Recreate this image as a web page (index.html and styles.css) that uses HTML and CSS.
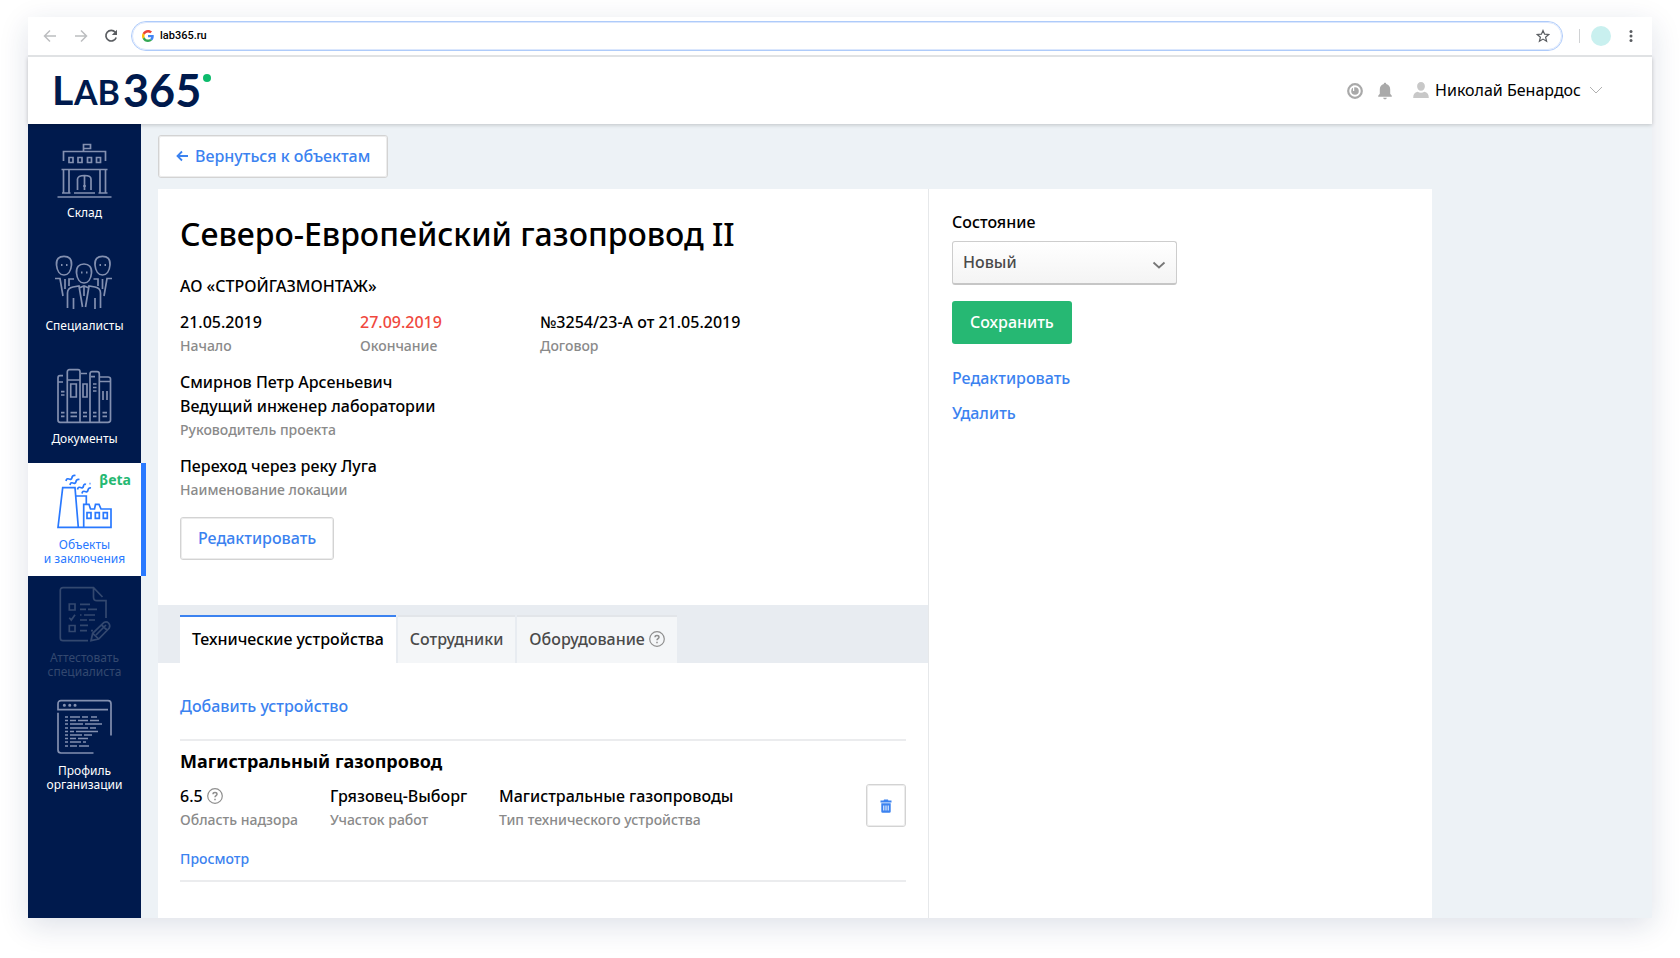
FILE: index.html
```
<!DOCTYPE html>
<html lang="ru">
<head>
<meta charset="utf-8">
<title>Северо-Европейский газопровод II — LAB365</title>
<link rel="stylesheet" href="styles.css">
</head>
<body>
<div class="window">
  <div class="toolbar">
    <div class="toolbar-nav">
      <button class="icon-btn muted" type="button" aria-label="Назад"><svg width="14" height="14" viewBox="0 0 14 14"><path d="M13 7H2M7 1.5L1.5 7L7 12.5"/></svg></button>
      <button class="icon-btn muted" type="button" aria-label="Вперёд"><svg width="14" height="14" viewBox="0 0 14 14"><path d="M1 7H12M7 1.5L12.500 7L7 12.5"/></svg></button>
      <button class="icon-btn" type="button" aria-label="Обновить"><svg width="14" height="14" viewBox="0 0 14 14"><path d="M11.300 3.300A5.300 5.300 0 1 0 12.200 8.500" stroke-width="1.700"/><path d="M13 .8V6H7.800Z" fill="currentColor" stroke="none"/></svg></button>
    </div>
    <div class="address">
      <svg width="12" height="12" viewBox="0 0 48 48"><path fill="#ea4335" d="M24 9.500c3.540 0 6.710 1.220 9.210 3.600l6.850-6.850C35.900 2.380 30.470 0 24 0 14.620 0 6.510 5.380 2.560 13.220l7.980 6.190C12.430 13.720 17.740 9.500 24 9.500z"/><path fill="#4285f4" d="M46.980 24.550c0-1.570-.15-3.090-.38-4.550H24v9.020h12.940c-.58 2.960-2.260 5.480-4.780 7.180l7.730 6c4.510-4.180 7.090-10.360 7.090-17.650z"/><path fill="#fbbc05" d="M10.530 28.590c-.48-1.450-.76-2.990-.76-4.590s.27-3.140.76-4.590l-7.980-6.190C.92 16.460 0 20.120 0 24c0 3.880.92 7.540 2.560 10.780l7.970-6.190z"/><path fill="#34a853" d="M24 48c6.480 0 11.930-2.130 15.890-5.810l-7.730-6c-2.150 1.450-4.920 2.300-8.160 2.300-6.260 0-11.570-4.220-13.470-9.910l-7.980 6.190C6.510 42.620 14.620 48 24 48z"/></svg>
      <input class="address-input" type="text" value="lab365.ru" aria-label="Адрес">
      <button class="icon-btn" type="button" aria-label="В закладки"><svg width="14" height="14" viewBox="0 0 14 14"><path stroke-width="1.200" d="M7 1.500L8.600 5.200L12.700 5.500L9.600 8.200L10.600 12.300L7 10.100L3.400 12.300L4.400 8.200L1.300 5.500L5.400 5.200Z"/></svg></button>
    </div>
    <div class="toolbar-end">
      <span class="separator"></span>
      <span class="profile-dot"></span>
      <button class="icon-btn" type="button" aria-label="Меню"><svg width="14" height="14" viewBox="0 0 14 14"><g fill="currentColor" stroke="none"><circle cx="7" cy="2.500" r="1.500"/><circle cx="7" cy="7" r="1.500"/><circle cx="7" cy="11.500" r="1.500"/></g></svg></button>
    </div>
  </div>

  <header class="header">
    <svg class="logo" width="168" height="56" viewBox="-4 -8 168 56" role="img" aria-label="LAB365">
      <text x="-3" y="34" font-size="41">L</text>
      <text x="19" y="34" font-size="34">AB</text>
      <text x="68" y="36" font-size="45">365</text>
      <circle cx="152" cy="7" r="4"/>
    </svg>
    <div class="header-tools">
      <button class="icon-btn soft" type="button" aria-label="Обновления"><svg width="16" height="16" viewBox="0 0 16 16"><circle cx="8" cy="8" r="6.800" stroke-width="2.200"/><circle cx="8" cy="8" r="3.800" fill="currentColor" stroke="none"/><path d="M6.600 2.800V8" stroke="#fff" stroke-width="1.200"/></svg></button>
      <button class="icon-btn soft" type="button" aria-label="Уведомления"><svg width="16" height="18" viewBox="0 0 16 18"><path fill="currentColor" stroke="none" d="M8 .8c.8 0 1.200.5 1.200 1.200 2.600.6 4 2.700 4 5.400v4.400l1.600 1.900v1H1.200v-1l1.600-1.900V7.400c0-2.700 1.400-4.800 4-5.400C6.800 1.300 7.200.8 8 .8zM6.200 15.700h3.600c-.2 1-.9 1.600-1.800 1.600s-1.600-.6-1.800-1.600z"/></svg></button>
      <button class="user" type="button">
        <svg width="16" height="16" viewBox="0 0 16 16"><path fill="#c8c8c8" d="M8 0c2.300 0 3.900 1.700 3.900 4.200S10.300 8.800 8 8.800 4.100 6.700 4.100 4.200 5.700 0 8 0zM.2 16c0-3.500 1.300-5.500 4.400-6.200 2 1.200 4.800 1.200 6.800 0 3.100.7 4.400 2.700 4.400 6.200z"/></svg>
        <span>Николай Бенардос</span>
        <svg class="user-arrow" width="14" height="8" viewBox="0 0 14 8"><path d="M1 1L7 7L13 1"/></svg>
      </button>
    </div>
  </header>

  <div class="body">
    <nav class="sidebar">
      <a class="nav-item" href="#">
        <svg class="nav-icon" width="56" height="56" viewBox="0 0 56 56"><path d="M.5 55H54.500M6.500 19V9.500H48.500V19M26.500 9.500V2.500H33.500V6.500H27M12 15.500h4v5h-4zM21 15.500h4v5h-4zM30.500 15.500h4v5h-4zM39.500 15.500h4v5h-4zM4.500 27.500H50.500M6.500 28V51M12 28V51M43 28V51M48.500 28V51M5 51H13.500M17 51H38M41.500 51H50.500M20.500 48V37Q21 33.500 27.500 33.500T34 37V48M27.500 34V48M26 44H29"/></svg>
        <span>Склад</span>
      </a>
      <a class="nav-item" href="#">
        <svg class="nav-icon" width="56" height="56" viewBox="0 0 56 56"><path d="M7 1.300C12 1.300 15 4 14.500 10C14 16 11 20 7 20S0 16-.5 10C-1 4 2 1.300 7 1.300zM45.500 1.300C50.500 1.300 53.500 4 53 10C52.500 16 49.500 20 45.500 20S38.500 16 38 10C37.500 4 40.500 1.300 45.500 1.300zM27 9C32 9 35 12 34.500 18C34 24 31 28 27 28S20 24 19.500 18C19 12 22 9 27 9zM-2 23.500H3L6 41M8 24V34M12 31V24H17M55 23.500H50L47 41M45.500 24V34M41 31V24H36.500M10.500 53V38Q10.500 33 16 32L22 31L25.500 52M43.500 53V38Q43.500 33 38 32L32 31L28.500 52M27 31V41M16.500 43V54M38 43V54M22 33L27 31L32 33"/><path stroke-width="2" d="M4 10H5.500M9 10H10.500M42.500 10H44M47.500 10H49M24 17.500H25.500M29 17.500H30.500"/></svg>
        <span>Специалисты</span>
      </a>
      <a class="nav-item" href="#">
        <svg class="nav-icon" width="56" height="56" viewBox="0 0 56 56"><path d="M6 7.700H3Q1 7.700 1 10V52Q1 54.300 3 54.300H51Q53.500 54.300 53.500 52V11Q53.500 9 51 9H43M10.300 54V4Q10.300 1.700 12.500 1.700H21Q23 1.700 23 4V54M24 5.500H30M33 54V6Q33 3.700 35 3.700H40Q42.300 3.700 42.300 6V54M10.300 12H23M1 14H6M34 8.700H38M43 13.500H53M13.700 16H19.300V29H13.700ZM26 16H30V29H26ZM46 23V32M50 23V32M4 23.700H7.500M4 27H7.500M36 16H39.500M36 19.500H39.500M36 23H39.500M4 44.700H7.500M4 48.300H7.500M13.500 44.700H20M13.500 48.300H20M26 44.700H30M26 48.300H30M36 44.700H39.500M36 48.300H39.500M45.500 44.700H50M45.500 48.300H50"/></svg>
        <span>Документы</span>
      </a>
      <a class="nav-item active" href="#" aria-current="page">
        <svg class="nav-icon" width="56" height="56" viewBox="0 0 56 56"><path d="M5.700 13.700H18L21.300 53.300H1ZM19 22H29.300V30M21.300 53.300H54V35H44L42 30.300H38.500L37.500 35H33.500L32 30.300H26.700V53.300M30 38.700h4v5.600h-4zM38.300 38.700h4v5.600h-4zM46.300 38.700h4v5.600h-4zM9 7Q9.500 4 12 5T15 3.500T18.500 1.500M13 11Q13.500 8 16 9T19 7.500T22.500 5.500M20.500 15.500Q21 12.500 23.500 13.500T26.500 12T29 10.500M25 19.500Q25.500 16.500 28 17.500T31 16T34 14M32.500 9.700H33.500"/></svg>
        <span>Объекты<br>и заключения</span>
        <span class="beta">βeta</span>
      </a>
      <a class="nav-item disabled" href="#" aria-disabled="true">
        <svg class="nav-icon" width="56" height="56" viewBox="0 0 56 56"><path d="M31 53.700H6Q3.300 53.700 3.300 51V3.500Q3.300.7 6 .7H36.500L45.500 10M36.500 1V10Q36.500 13.700 40 13.700H49V31M12.300 17H18V23H12.300ZM12.300 30.700L14.300 33L18 27.700M12.300 38.500H18V44.500H12.300ZM23 17.300H33M23 22.300H29M31 22.300H40M23 28H24.500M27 28H38M23 33H30M32 33H38M23 38.300H31M23 43.700H30M34 43.700H36M34 53.700L35.700 46.300L47 35.500Q49.500 34 51.500 36T52.300 41L41.700 52ZM35.700 46.300L41.700 52M39 48L49 38M44.500 38L50 43"/></svg>
        <span>Аттестовать<br>специалиста</span>
      </a>
      <a class="nav-item" href="#">
        <svg class="nav-icon" width="56" height="56" viewBox="0 0 56 56"><path d="M51 9.700H1V4Q1 .7 4 .7H51Q54 .7 54 4V35.500M1 12.700V50Q1 53 4 53H36.500M8 17H11M13 17H23M25 17H31M34 17H40M8 20.500H11M13 20.500H19M21 20.500H31M33 20.500H42M8 24H11M13 24H26M28 24H45M8 28H11M13 28H31M33 28H39M8 31.500H11M13 31.500H17M19 31.500H41M8 35H11M13 35H25M27 35H35M8 38.500H11M13 38.500H19M21 38.500H31M8 42H11M13 42H24M26 42H29M8 46H11M13 46H20M22 46H32"/><path stroke-width="3" stroke-linecap="round" d="M7.300 5.300h.1M12.700 5.300h.1M18 5.300h.1"/></svg>
        <span>Профиль<br>организации</span>
      </a>
    </nav>

    <main class="content">
      <a class="btn" href="#"><svg width="13" height="12" viewBox="0 0 13 12"><path stroke-width="1.800" d="M12 6H2M6 1.500L1.500 6L6 10.500"/></svg>Вернуться к объектам</a>

      <div class="card">
        <section class="details">
          <div class="summary">
            <h1>Северо-Европейский газопровод II</h1>
            <p>АО «СТРОЙГАЗМОНТАЖ»</p>
            <dl class="dates">
              <div class="field"><dd>21.05.2019</dd><dt>Начало</dt></div>
              <div class="field"><dd class="overdue">27.09.2019</dd><dt>Окончание</dt></div>
              <div class="field"><dd>№3254/23-А от 21.05.2019</dd><dt>Договор</dt></div>
            </dl>
            <dl class="field"><dd>Смирнов Петр Арсеньевич<br>Ведущий инженер лаборатории</dd><dt>Руководитель проекта</dt></dl>
            <dl class="field"><dd>Переход через реку Луга</dd><dt>Наименование локации</dt></dl>
            <button class="btn" type="button">Редактировать</button>
          </div>

          <div class="tabs" role="tablist">
            <button class="tab selected" type="button" role="tab" aria-selected="true">Технические устройства</button>
            <button class="tab" type="button" role="tab">Сотрудники</button>
            <button class="tab" type="button" role="tab">Оборудование <svg class="help" width="16" height="16" viewBox="0 0 16 16"><circle cx="8" cy="8" r="7.300"/><path d="M6 6.300Q6 4.600 8 4.600T10 6.300C10 7.600 8 7.700 8 9.300M8 10.700V12.200" stroke-width="1.500"/></svg></button>
          </div>

          <div class="devices">
            <a class="link" href="#">Добавить устройство</a>
            <article class="device">
              <h2>Магистральный газопровод</h2>
              <div class="device-row">
                <dl class="device-fields">
                  <div class="field"><dd>6.5 <svg class="help" width="16" height="16" viewBox="0 0 16 16"><circle cx="8" cy="8" r="7.300"/><path d="M6 6.300Q6 4.600 8 4.600T10 6.300C10 7.600 8 7.700 8 9.300M8 10.700V12.200" stroke-width="1.500"/></svg></dd><dt>Область надзора</dt></div>
                  <div class="field"><dd>Грязовец-Выборг</dd><dt>Участок работ</dt></div>
                  <div class="field"><dd>Магистральные газопроводы</dd><dt>Тип технического устройства</dt></div>
                </dl>
                <button class="btn square" type="button" aria-label="Удалить устройство"><svg width="12" height="16" viewBox="0 0 12 16"><path fill="currentColor" stroke="none" d="M4 1.500h4l.4 1H11.500v2H.5v-2h3.100zM1.300 5.300h9.400V13.500q0 1.300-1.300 1.300H2.600q-1.300 0-1.300-1.300z"/><path stroke="#fff" stroke-width="1" d="M3.800 7.500V12.500M6 7.500V12.500M8.200 7.500V12.500"/></svg></button>
              </div>
              <a class="link small" href="#">Просмотр</a>
            </article>
          </div>
        </section>

        <aside class="actions">
          <label for="state">Состояние</label>
          <div class="select">
            <select id="state"><option>Новый</option></select>
            <svg width="14" height="8" viewBox="0 0 14 8"><path d="M1.500 1.500L7 6.500L12.500 1.500" stroke-width="1.800"/></svg>
          </div>
          <button class="btn primary" type="button">Сохранить</button>
          <a class="link" href="#">Редактировать</a>
          <a class="link" href="#">Удалить</a>
        </aside>
      </div>
    </main>
  </div>
</div>
</body>
</html>
```
FILE: styles.css
```
* { box-sizing: border-box; }

body {
  margin: 0;
  min-height: 100vh;
  padding: 17px 28px 40px;
  display: flex;
  background: #fff;
  color: #000;
  font: 500 16px/24px "Noto Sans", sans-serif;
}

h1, h2, p, dl, dd, dt { margin: 0; }
button, select, input { font: inherit; color: inherit; }
button { cursor: pointer; }
a { text-decoration: none; }

svg { flex: none; fill: none; stroke: currentColor; stroke-width: 1.5; }

.window {
  flex: 1;
  min-width: 0;
  display: flex;
  flex-direction: column;
  background: #fff;
  box-shadow: 0 8px 28px rgba(20, 40, 90, .14);
}

/* Browser toolbar */
.toolbar {
  position: relative;
  z-index: 1;
  display: flex;
  align-items: center;
  gap: 13px;
  padding: 4px 14px 4px 15px;
  border-bottom: 2px solid #e0e2e4;
  background: #fff;
}
.toolbar-nav { display: flex; gap: 17px; }
.toolbar-end { display: flex; align-items: center; gap: 11px; }
.icon-btn {
  display: flex;
  padding: 0;
  border: 0;
  background: none;
  color: #5a5d61;
}
.toolbar-nav .icon-btn:last-child { margin-left: -1px; }
.muted { color: #bcbec0; }
.soft { color: #a9a9a9; }
.address {
  flex: 1;
  display: flex;
  align-items: center;
  gap: 6px;
  height: 30px;
  padding: 0 12px 0 10px;
  border: 1px solid #aecbfa;
  outline: 1px solid #dbe7fd;
  outline-offset: -2px;
  border-radius: 15px;
}
.address svg path[fill] { stroke: none; }
.address-input {
  flex: 1;
  min-width: 0;
  padding: 0;
  border: 0;
  outline: 0;
  background: none;
  font: 500 11px/16px Roboto, sans-serif;
}
.separator { width: 1px; height: 14px; background: #d0d2d4; margin-left: 3px; }
.profile-dot { width: 20px; height: 20px; border-radius: 50%; background: #c9f0ef; }
.toolbar-end .icon-btn { margin-left: 2px; }

/* Application header */
.header {
  position: relative;
  display: flex;
  align-items: center;
  justify-content: space-between;
  height: 67px;
  padding: 0 49px 0 23px;
  box-shadow: 0 1px 4px rgba(0, 0, 0, .2);
}
.logo {
  font-family: Lato, sans-serif;
  font-weight: 700;
  fill: #001a4d;
  stroke: none;
}
.logo circle { fill: #0dbb6c; }
.header-tools { display: flex; align-items: center; gap: 14px; }
.user {
  display: flex;
  align-items: center;
  gap: 6px;
  padding: 0 0 2px;
  margin-left: 6px;
  border: 0;
  background: none;
  font-weight: 400;
}
.user svg path[fill] { stroke: none; }
.user-arrow { margin-left: 2px; color: #b0b0b0; stroke-width: 1; }

.body { flex: 1; display: flex; background: #edf2f6; }

/* Sidebar */
.sidebar { flex: 0 0 113px; background: #001a4d; }
.nav-item {
  position: relative;
  display: flex;
  flex-direction: column;
  align-items: center;
  justify-content: center;
  gap: 8px;
  height: 113px;
  color: #fff;
  font-size: 12px;
  font-weight: 400;
  line-height: 14px;
  text-align: center;
}
.nav-icon { overflow: visible; color: #8390b0; stroke-width: 1.7; }
.nav-item.active { background: #fff; color: #2979ff; box-shadow: 5px 0 #2979ff; }
.nav-item.active .nav-icon { color: inherit; }
.nav-item.disabled, .nav-item.disabled .nav-icon { color: #33486f; }
.beta {
  position: absolute;
  top: 7px;
  right: 10px;
  color: #25b872;
  font-size: 14px;
  line-height: 20px;
  font-weight: 700;
}

/* Content */
.content { flex: 1; min-width: 0; display: flex; flex-direction: column; align-items: flex-start; padding: 11px 16px 0 17px; }

.btn {
  display: inline-flex;
  align-items: center;
  justify-content: center;
  gap: 6px;
  height: 43px;
  padding: 0 17px 2px;
  border: 1px solid #d3d3d3;
  outline: 1px solid #ececec;
  outline-offset: -2px;
  border-radius: 3px;
  background: #fff;
  color: #3b82f0;
}
.btn.primary { border: 0; outline: 0; padding: 0 18px 2px; background: #26b873; color: #fff; }
.btn.square { width: 40px; padding: 0; }

.card {
  flex: 1;
  display: grid;
  grid-template-columns: 771fr 503fr;
  width: 100%;
  max-width: 1274px;
  margin-top: 11px;
  background: #fff;
}
.details { border-right: 1px solid #e6e8ea; }
.summary {
  display: flex;
  flex-direction: column;
  align-items: flex-start;
  gap: 12px;
  padding: 23px 22px 45px;
}
h1 { margin-bottom: 6px; font-size: 32px; line-height: 44px; font-weight: 500; }
.dates { display: grid; grid-template-columns: 180px 180px auto; }
.field { display: flex; flex-direction: column; }
.field dt { color: #8a8a8a; font-size: 14px; }
.overdue { color: #f0483e; }
.summary .btn { margin-top: 3px; }

.tabs { display: flex; gap: 2px; padding: 10px 22px 0; background: #e8ecf1; }
.tab {
  display: flex;
  align-items: center;
  gap: 4px;
  height: 48px;
  padding: 0 12px 2px;
  border: 0;
  border-top: 2px solid #e2e5e9;
  background: #f4f6f8;
  color: #4a4a4a;
}
.tab.selected { border-top-color: #3b82f0; background: #fff; color: #000; }
.help { color: #8f8f8f; stroke-width: 1.2; vertical-align: -2px; }

.devices { display: flex; flex-direction: column; padding: 31px 22px 16px; }
.link { align-self: flex-start; color: #3b82f0; }
.link.small { font-size: 14px; }
.device {
  display: flex;
  flex-direction: column;
  margin-top: 21px;
  padding: 6px 0 9px;
  border: solid #ebecee;
  border-width: 2px 0;
}
h2 { font-size: 18px; line-height: 28px; font-weight: 700; }
.device-row { display: flex; align-items: flex-start; justify-content: space-between; margin: 9px 0 15px; }
.device-fields { display: grid; grid-template-columns: 150px 169px auto; }

.actions { display: flex; flex-direction: column; align-items: flex-start; padding: 21px 23px; }
.select { position: relative; width: 225px; margin: 7px 0 16px; }
.select select {
  display: block;
  width: 100%;
  height: 44px;
  padding: 0 36px 2px 10px;
  appearance: none;
  border: 1px solid #cdcdcd;
  border-bottom: 2px solid #c6c6c6;
  border-radius: 3px;
  background: linear-gradient(#fff, #f4f4f4);
  color: #4a4a4a;
}
.select svg { position: absolute; right: 11px; top: 20px; color: #777; pointer-events: none; }
.actions .btn { margin-bottom: 22px; }
.actions .link + .link { margin-top: 11px; }
```
